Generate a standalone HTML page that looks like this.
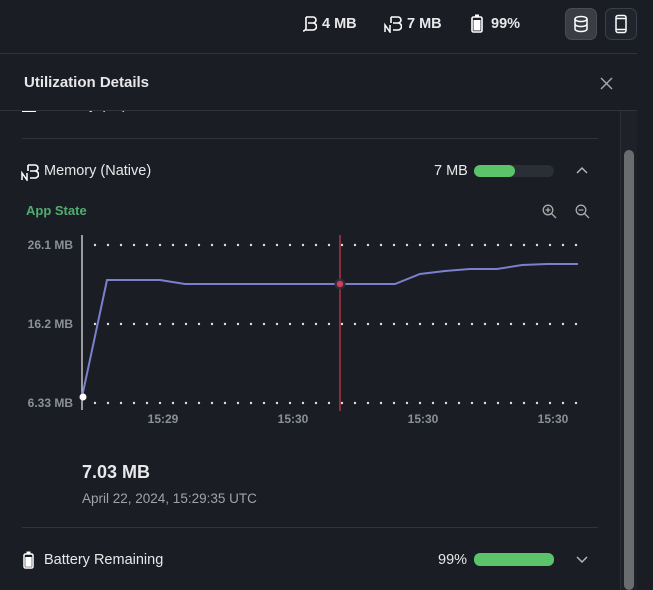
<!DOCTYPE html>
<html><head><meta charset="utf-8"><style>
*{margin:0;padding:0;box-sizing:border-box}
body{width:653px;height:590px;background:#1a1d24;font-family:"Liberation Sans",sans-serif;color:#e8e8ea;position:relative;overflow:hidden}
.a{position:absolute}
.hl{position:absolute;height:1px;background:#30343c}
.t{font-size:14.5px;white-space:nowrap}
</style></head><body>
<!-- peeking row -->
<div class="a" style="left:0;top:111px;width:620px;height:4px;overflow:hidden">
<div class="a t" style="left:44px;top:-14px">Memory (JS)</div>
<div class="a" style="left:22px;top:-1px;width:14px;height:2px;background:#fff"></div>
<div class="a t" style="left:440px;top:-14px">4 MB</div>
</div>
<!-- top bar -->
<svg class="a" style="left:301px;top:15px" width="16" height="18" viewBox="0 0 16 18" fill="none" stroke="#fff" stroke-width="1.6"><path d="M5 2h7a3 3 0 0 1 0 6H7M7 8h5a3.5 3.5 0 0 1 0 7H5M5 2v11a3 3 0 0 1-3 3"/></svg>
<div class="a t" style="left:322px;top:16px;font-weight:bold">4 MB</div>
<svg class="a" style="left:384px;top:15px" width="18" height="18" viewBox="0 0 18 18" fill="none" stroke="#fff" stroke-width="1.6"><path d="M7 2h7a3 3 0 0 1 0 6H9M9 8h5a3.5 3.5 0 0 1 0 7H9M7 2v6"/><path d="M1 17V10l5 7V10" stroke-width="1.5"/></svg>
<div class="a t" style="left:407px;top:16px;font-weight:bold">7 MB</div>
<svg class="a" style="left:471px;top:14px" width="12" height="19" viewBox="0 0 12 19"><rect x="4" y="0.5" width="4" height="3" fill="#fff"/><rect x="1" y="3" width="10" height="15" rx="1.5" fill="none" stroke="#fff" stroke-width="1.6"/><rect x="2.5" y="6" width="7" height="10.5" fill="#fff"/></svg>
<div class="a t" style="left:491px;top:16px;font-weight:bold">99%</div>
<div class="a" style="left:565px;top:8px;width:32px;height:32px;border-radius:7px;background:#3a3d44;border:1px solid #4a4d55"></div>
<svg class="a" style="left:572px;top:15px" width="18" height="18" viewBox="0 0 18 18" fill="none" stroke="#fff" stroke-width="1.5"><ellipse cx="9" cy="4" rx="6" ry="2.5"/><path d="M3 4v10c0 1.4 2.7 2.5 6 2.5s6-1.1 6-2.5V4M3 9c0 1.4 2.7 2.5 6 2.5S15 10.4 15 9"/></svg>
<div class="a" style="left:605px;top:8px;width:32px;height:32px;border-radius:7px;background:#20242c;border:1px solid #3a3f48"></div>
<svg class="a" style="left:613px;top:14px" width="16" height="20" viewBox="0 0 16 20" fill="none" stroke="#fff" stroke-width="1.5"><rect x="3" y="1.5" width="10" height="17" rx="2"/><path d="M3 4.5h10M3 15.5h10"/></svg>
<div class="hl" style="left:0;top:53px;width:637px"></div>
<!-- header -->
<div class="a t" style="left:24px;top:74px;font-weight:bold;font-size:15px">Utilization Details</div>
<svg class="a" style="left:600px;top:77px" width="13" height="13" viewBox="0 0 13 13" stroke="#aaa" stroke-width="1.4"><path d="M1 1l11 11M12 1L1 12"/></svg>
<div class="hl" style="left:0;top:110px;width:637px"></div>
<!-- scrollbar -->
<div class="a" style="left:620px;top:111px;width:17px;height:479px;background:#1e2127;border-left:1px solid #2c2f36"></div>
<div class="a" style="left:624px;top:150px;width:10px;height:440px;border-radius:5px;background:#6b6c70"></div>
<div class="hl" style="left:22px;top:138px;width:576px"></div>
<!-- memory row -->
<svg class="a" style="left:21px;top:163px" width="18" height="18" viewBox="0 0 18 18" fill="none" stroke="#fff" stroke-width="1.6"><path d="M7 2h7a3 3 0 0 1 0 6H9M9 8h5a3.5 3.5 0 0 1 0 7H9M7 2v6"/><path d="M1 17V10l5 7V10" stroke-width="1.5"/></svg>
<div class="a t" style="left:44px;top:163px">Memory (Native)</div>
<div class="a t" style="left:434px;top:163px">7 MB</div>
<div class="a" style="left:474px;top:165px;width:80px;height:12px;border-radius:6px;background:#2a2e36"></div>
<div class="a" style="left:474px;top:165px;width:41px;height:12px;border-radius:6px;background:#5bc46a"></div>
<svg class="a" style="left:576px;top:166px" width="12" height="8" viewBox="0 0 12 8" fill="none" stroke="#bbb" stroke-width="1.4"><path d="M1 7l5-5 5 5"/></svg>
<div class="a" style="left:26px;top:203px;font-size:13px;font-weight:bold;color:#4fae6e">App State</div>
<svg class="a" style="left:542px;top:204px" width="15" height="15" viewBox="0 0 15 15" fill="none" stroke="#aaa" stroke-width="1.3"><circle cx="6" cy="6" r="4.8"/><path d="M9.5 9.5L14 14M6 3.5v5M3.5 6h5"/></svg>
<svg class="a" style="left:575px;top:204px" width="15" height="15" viewBox="0 0 15 15" fill="none" stroke="#aaa" stroke-width="1.3"><circle cx="6" cy="6" r="4.8"/><path d="M9.5 9.5L14 14M3.5 6h5"/></svg>
<!-- chart -->
<svg class="a" style="left:0;top:0" width="620" height="590">
<g font-family="Liberation Sans" font-size="12" font-weight="bold" fill="#8a8f99" text-anchor="end">
<text x="73" y="249">26.1 MB</text><text x="73" y="328">16.2 MB</text><text x="73" y="407">6.33 MB</text></g>
<g stroke="#e0e0e0" stroke-width="2.4" stroke-linecap="round" stroke-dasharray="0 13">
<path d="M95 245H580M95 324H580M95 403H580"/></g>
<path d="M82 235V410" stroke="#eee" stroke-width="1.2"/>
<path d="M340 235V411" stroke="#c8364f" stroke-width="1.3"/>
<polyline points="82,397 107,280 160,280 185,284 395,284 420,274 445,271 470,269 497,269 522,265 547,264 578,264" fill="none" stroke="#7b80cc" stroke-width="2"/>
<circle cx="83" cy="397" r="3.5" fill="#fff"/>
<circle cx="340" cy="284" r="5.5" fill="#2a2e38"/><circle cx="340" cy="284" r="3.2" fill="#d63a5c"/>
<g font-family="Liberation Sans" font-size="12" font-weight="bold" fill="#8a8f99" text-anchor="middle">
<text x="163" y="423">15:29</text><text x="293" y="423">15:30</text><text x="423" y="423">15:30</text><text x="553" y="423">15:30</text></g>
</svg>
<div class="a" style="left:82px;top:462px;font-size:18px;font-weight:bold">7.03 MB</div>
<div class="a t" style="left:82px;top:491px;color:#a0a3aa;font-size:13.5px">April 22, 2024, 15:29:35 UTC</div>
<div class="hl" style="left:22px;top:527px;width:576px"></div>
<!-- battery row -->
<svg class="a" style="left:23px;top:551px" width="11" height="18" viewBox="0 0 11 18"><rect x="3.5" y="0.5" width="4" height="3" fill="#fff"/><rect x="1" y="3" width="9" height="14" rx="1.5" fill="none" stroke="#fff" stroke-width="1.5"/><rect x="2.3" y="6" width="6.4" height="9.8" fill="#fff"/></svg>
<div class="a t" style="left:44px;top:552px">Battery Remaining</div>
<div class="a t" style="left:438px;top:552px">99%</div>
<div class="a" style="left:474px;top:553px;width:80px;height:13px;border-radius:6px;background:#5bc46a"></div>
<svg class="a" style="left:576px;top:556px" width="12" height="8" viewBox="0 0 12 8" fill="none" stroke="#bbb" stroke-width="1.4"><path d="M1 1l5 5 5-5"/></svg>
</body></html>
